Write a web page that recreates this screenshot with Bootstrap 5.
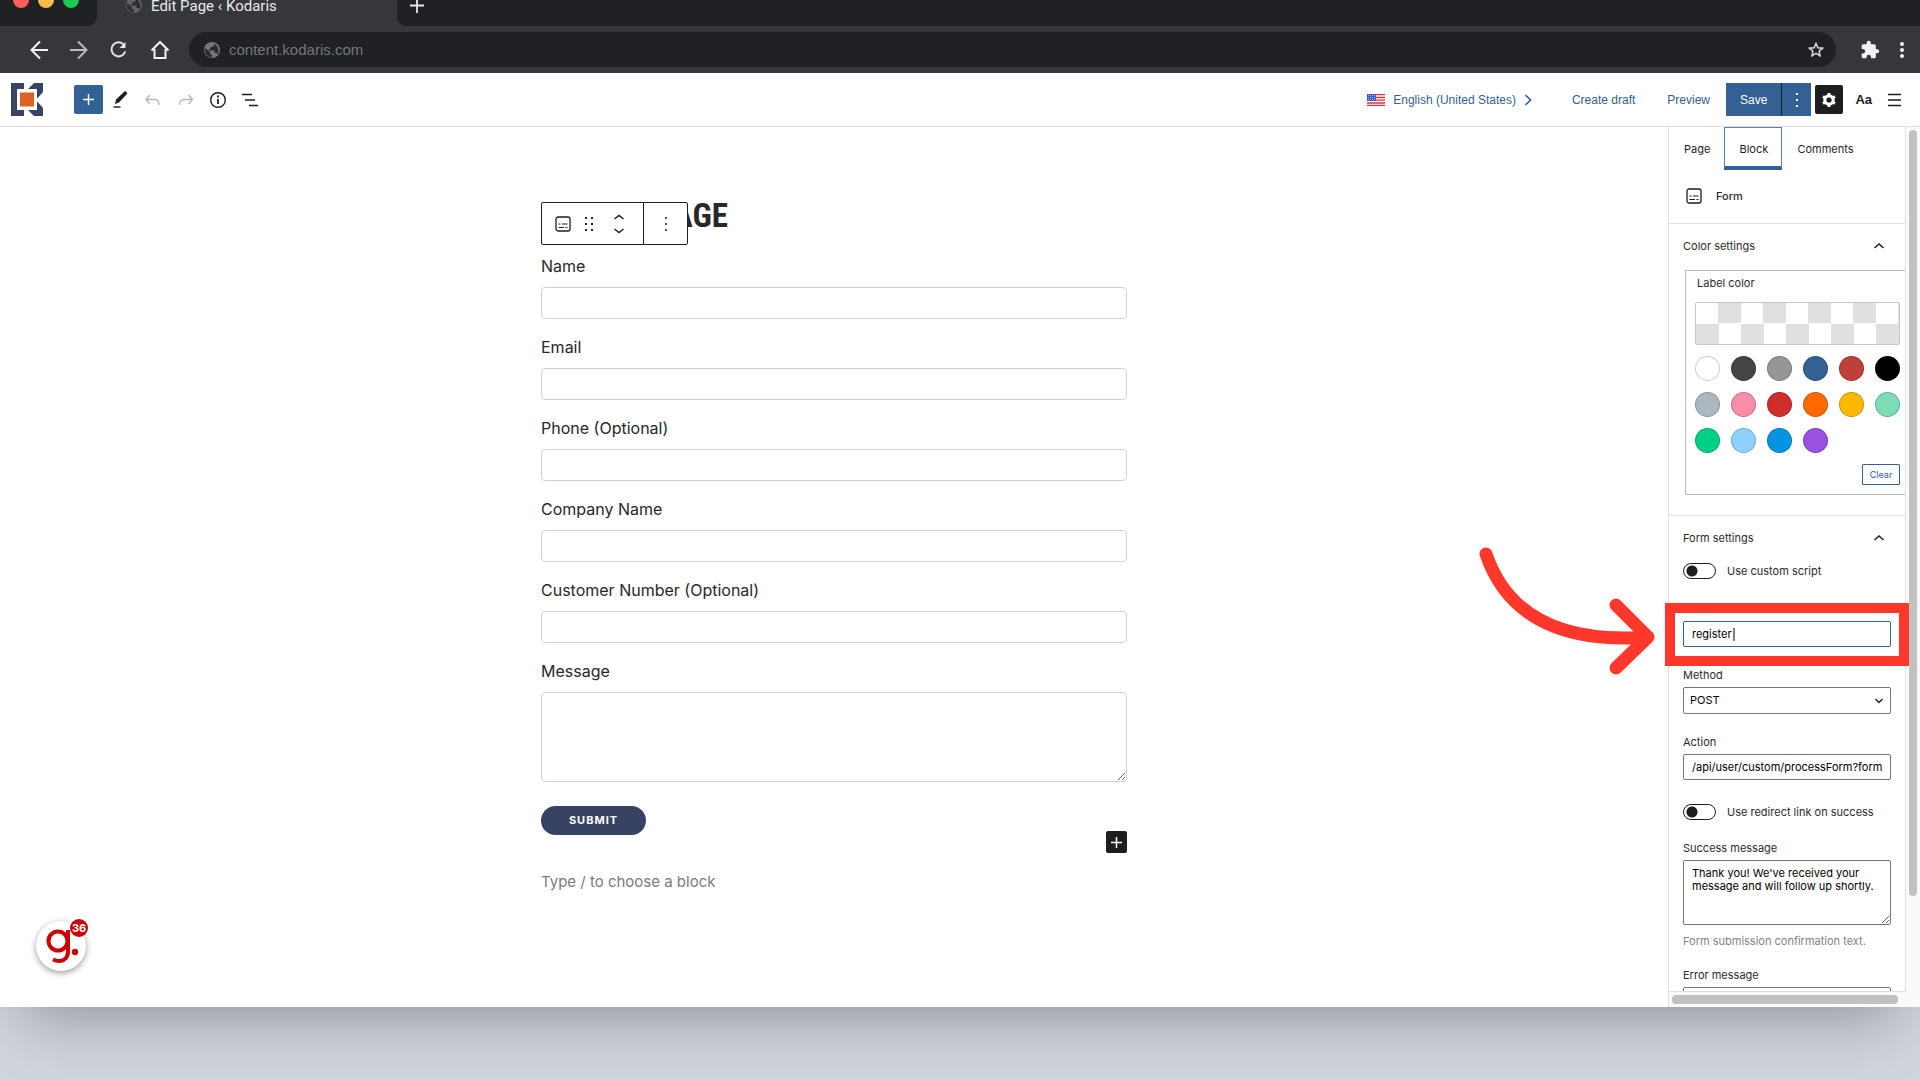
<!DOCTYPE html>
<html lang="en">
<head>
<meta charset="utf-8">
<meta name="viewport" content="width=device-width, initial-scale=1">
<title>Edit Page ‹ Kodaris</title>
<link rel="stylesheet" href="https://cdn.jsdelivr.net/npm/bootstrap@5.3.0/dist/css/bootstrap.min.css">
<style>
  :root { --blue: #336195; --ink: #1e1e1e; --chrome: #36373a; --chrome-dark: #202124; --line: #e0e0e0; }
  body { background: #d0d4dd; min-height: 100vh; color: var(--ink); font-family: Inter, sans-serif; font-size: 11px; line-height: 16px; }
  svg { display: block; flex: none; }
  button { font-family: inherit; }
  .app-window { height: calc(100vh - 73px); background: #fff; box-shadow: 0 30px 60px -24px rgba(0,0,0,.34); }
  .bare { background: none; border: 0; padding: 0; color: inherit; }

  .tab-strip { height: 26px; background: var(--chrome); color: #e8eaed; font: 15px/12px Roboto, sans-serif; }
  .strip-left { width: 97px; background: var(--chrome-dark); border-bottom-right-radius: 9px; }
  .strip-tab { width: 300px; padding-left: 28px; }
  .strip-rest { background: var(--chrome-dark); border-bottom-left-radius: 9px; padding-left: 12px; }
  .url-row { height: 47px; background: var(--chrome); padding: 0 12px 0 28px; }
  .url-nav { gap: 18px; margin-right: 17px; }
  .url-pill { height: 35px; border-radius: 18px; background: var(--chrome-dark); padding: 0 12px 0 14px; gap: 8px; }
  .url-pill input { background: none; border: 0; outline: 0; color: #74777b; font: 15px/20px "Liberation Sans", sans-serif; padding: 0; }

  .editor-bar { height: 54px; border-bottom: 1px solid var(--line); padding: 0 18px 0 11px; font: 12px/16px "Liberation Sans", sans-serif; }
  .editor-bar a { color: var(--blue); text-decoration: none; }
  .tool-set { margin-left: 31px; gap: 8px; }
  .add-btn { width: 29px; height: 29px; background: var(--blue); border-radius: 2px; color: #fff; }
  .save-btn { height: 33px; background: var(--blue); color: #fff; border: 0; border-radius: 0; padding: 0 14px; font-size: 12px; line-height: 16px; }
  .more-btn { height: 33px; width: 30px; background: var(--blue); border: 0; border-left: 1px solid var(--ink); padding: 0; }
  .gear-btn { width: 28px; height: 29px; background: var(--ink); border-radius: 2px; }
  .type-btn { font: bold 13px/20px "Liberation Sans", sans-serif; }

  .workspace { min-height: 0; }
  .canvas-area { padding-top: 72px; }
  .form-col { width: 100%; max-width: 586px; font-size: 15px; line-height: 24px; }
  .form-col h1 { font: bold 33px/34px "Liberation Sans Narrow", "Roboto Condensed", "DejaVu Sans Condensed", sans-serif; color: #282828; width: 187px; margin: 0 0 21px; text-align: right; }
  .block-bar { left: 0; top: 3px; width: 147px; height: 43px; border: 1px solid var(--ink); border-radius: 2px; background: #fff; }
  .block-bar-main { width: 102px; border-right: 1px solid var(--ink); padding-left: 13px; gap: 14px; }
  .field-row { margin-bottom: 16px; }
  .field-row label { margin-bottom: 9px; display: block; color: #282828; font-size: 16px; }
  .field-row input, .field-row textarea { display: block; width: 100%; height: 32px; border: 1px solid #ced1d8; border-radius: 4px; background: #fff; padding: 4px 8px; }
  .field-row textarea { height: 90px; }
  .submit-btn { display: block; width: 105px; height: 29px; border: 0; border-radius: 15px; background: #384363; color: #fff; font: bold 11px/16px Inter, sans-serif; letter-spacing: 1px; padding: 0 0 2px; margin-top: 24px; }
  .inserter { width: 21px; height: 22px; background: var(--ink); border-radius: 2px; margin-top: -4px; }
  .prompt { color: #7b7b7b; margin: 17px 0 0; }
  .g-bubble { left: 36px; bottom: 36px; width: 50px; height: 50px; border-radius: 50%; background: #fff; box-shadow: 0 2px 6px rgba(0,0,0,.4); }
  .g-count { right: -2px; top: -2px; width: 18px; height: 18px; border-radius: 50%; background: #c00; color: #fff; font: bold 11px/18px Inter, sans-serif; text-align: center; }

  .side { width: 252px; border-left: 1px solid var(--line); }
  .side-body { border-right: 1px solid var(--line); border-bottom: 1px solid var(--line); overflow: hidden; min-width: 0; color: #2b2b2b; }
  .side-tabs button { height: 43px; padding: 0 13px 0 14px; border: 1px solid transparent; background: none; color: var(--ink); font-size: 11px; line-height: 16px; }
  .side-tabs button.on { border: 1px solid #5b80ab; border-bottom: 4px solid var(--blue); padding-top: 3px; width: 58px; }
  .block-name { height: 54px; padding: 0 0 2px 17px; gap: 14px; border-bottom: 1px solid var(--line); font-weight: 500; }
  .side-panel { padding: 0 14px; }
  .panel-title { height: 44px; width: 100%; padding-right: 6px; }
  .color-box { margin: 2px -20px 20px 2px; border: 1px solid #bbb; padding: 4px 24px 8px 9px; height: 225px; }
  .color-box-name { padding: 0 0 2px 2px; }
  .checker { height: 43px; width: 205px; border: 1px solid #c6c6c6; border-radius: 2px; margin: 9px 0 11px; background: repeating-conic-gradient(#e0e0e0 0 25%, #fff 0 50%) 0 -1px / 45px 43px; }
  .swatches { display: grid; grid-template-columns: repeat(6, 25px); gap: 11px; }
  .dot { width: 25px; height: 25px; border-radius: 50%; border: 1px solid rgba(0,0,0,.2); padding: 0; }
  .clear-btn { display: block; width: 38px; height: 21px; margin: 11px 0 0 167px; border: 1px solid var(--blue); border-radius: 1px; color: var(--blue); background: #fff; font-size: 9px; line-height: 16px; padding: 0; }
  .settings { border-top: 1px solid var(--line); }
  .switch { height: 16px; gap: 11px; margin-top: 3px; }
  .switch input { appearance: none; width: 33px; height: 16px; margin: 0; border: 1px solid var(--ink); border-radius: 8px; background: radial-gradient(circle at 8px 7px, var(--ink) 5px, transparent 6px); }
  .side-field { margin-top: 20px; }
  .side-field label { display: block; margin-bottom: 4px; }
  .side-field input, .side-field select, .side-field textarea, .name-input { display: block; width: 100%; height: 26px; border: 1px solid #757575; border-radius: 2px; background: #fff; color: #000; font: 11px/13px Inter, sans-serif; padding: 4px 8px; outline: 0; }
  .side-field select { appearance: none; height: 27px; padding-left: 6px; }
  .side-field textarea { height: 65px; padding-top: 6px; }
  .name-input { border-color: var(--blue); margin-top: 42px; }
  .select-mark { right: 8px; bottom: 10px; pointer-events: none; }
  .help { color: #838383; margin: 8px 0 -2px; }
  .track-v { width: 14px; background: #fafafa; padding: 3px 3px 96px; }
  .track-h { height: 15px; background: #fafafa; padding: 3px 22px 3px 3px; }
  .thumb { background: #c1c1c1; border-radius: 4px; }
  .callout { right: 0; top: 400px; pointer-events: none; }
</style>
<script src="https://cdn.jsdelivr.net/npm/bootstrap@5.3.0/dist/js/bootstrap.bundle.min.js"></script>
</head>
<body>
<svg width="0" height="0" class="position-absolute" aria-hidden="true">
  <symbol id="globe" viewBox="0 0 18 18"><circle cx="9" cy="9" r="8" fill="#74777b"/><path d="M2 7l5 4v2l2 1v2.500C4 16 1 12 2 7zM11 2.500v2l-2 1.500H7.500v2H6v1.500h5.500v2.500h2l1 1.500c2-3 1-8-3.500-11z" fill="#2a2b2e"/></symbol>
  <symbol id="formicon" viewBox="0 0 16 16"><rect x="1" y="1" width="14" height="14" rx="2" fill="none" stroke="#1e1e1e" stroke-width="1.300"/><path d="M3.500 8h2M7 8h5.500M3.500 11.500h5.500M10.500 11.500h2" stroke="#1e1e1e" stroke-width="1.200"/></symbol>
  <symbol id="up" viewBox="0 0 12 8"><path d="M1.500 6L6 2l4.500 4" fill="none" stroke="#1e1e1e" stroke-width="1.500"/></symbol>
</svg>

<div class="app-window d-flex flex-column">
  <div class="tab-strip d-flex flex-shrink-0">
    <div class="strip-left">
      <svg width="97" height="12"><circle cx="21" cy="0" r="8" fill="#ff5f57"/><circle cx="46" cy="0" r="8" fill="#febc4f"/><circle cx="71" cy="0" r="8" fill="#1fc94f"/></svg>
    </div>
    <div class="strip-tab d-flex align-items-start gap-2">
      <svg width="18" height="14" viewBox="0 4 18 14" opacity=".7"><use href="#globe" width="18" height="18"/></svg>
      <span>Edit Page ‹ Kodaris</span>
    </div>
    <div class="strip-rest flex-grow-1">
      <button class="bare" aria-label="New tab"><svg width="16" height="14"><path d="M1 5.500h14M8 0v13" stroke="#e8eaed" stroke-width="1.800"/></svg></button>
    </div>
  </div>

  <div class="url-row d-flex align-items-center flex-shrink-0">
    <div class="url-nav d-flex align-items-center">
      <button class="bare" aria-label="Back"><svg width="22" height="22" fill="none" stroke="#f1f3f4" stroke-width="2"><path d="M20 11H4M12 2.500L3.500 11l8.500 8.500"/></svg></button>
      <button class="bare" aria-label="Forward"><svg width="22" height="22" fill="none" stroke="#b9bbbe" stroke-width="2"><path d="M2 11h16M10 2.500l8.500 8.500-8.500 8.500"/></svg></button>
      <button class="bare" aria-label="Reload"><svg width="22" height="22" fill="none" stroke="#e3e5e7" stroke-width="2"><path d="M16 6a7 7 0 1 0 1.200 6.500"/><path d="M17.500 3v6h-6z" fill="#e3e5e7" stroke="none"/></svg></button>
      <button class="bare" aria-label="Home"><svg width="24" height="22" fill="none" stroke="#f1f3f4" stroke-width="2"><path d="M6.500 10v9h11v-9M3.500 11.500L12 3l8.500 8.500"/></svg></button>
    </div>
    <div class="url-pill flex-grow-1 d-flex align-items-center">
      <svg width="18" height="18"><use href="#globe"/></svg>
      <input class="flex-grow-1" type="text" aria-label="Address" value="content.kodaris.com">
      <button class="bare" aria-label="Bookmark"><svg width="16" height="16" viewBox="0 0 16 16"><path d="M8 1.500l1.900 4.200 4.600.5-3.400 3 .9 4.500L8 11.400l-4 2.300.9-4.500-3.400-3 4.600-.5z" fill="none" stroke="#dadce0" stroke-width="1.500"/></svg></button>
    </div>
    <button class="bare ms-4" aria-label="Extensions"><svg width="20" height="20" viewBox="0 0 24 24"><path fill="#f1f3f4" d="M20.500 11H19V7c0-1.100-.9-2-2-2h-4V3.500a2.500 2.500 0 0 0-5 0V5H4c-1.100 0-2 .9-2 2v3.800h1.500a2.700 2.700 0 0 1 0 5.400H2V20c0 1.100.9 2 2 2h3.800v-1.500a2.700 2.700 0 0 1 5.400 0V22H17c1.100 0 2-.9 2-2v-4h1.500a2.500 2.500 0 0 0 0-5z"/></svg></button>
    <button class="bare ms-3" aria-label="Browser menu"><svg width="12" height="20" fill="#f1f3f4"><circle cx="6" cy="4" r="2"/><circle cx="6" cy="10" r="2"/><circle cx="6" cy="16" r="2"/></svg></button>
  </div>

  <header class="editor-bar d-flex align-items-center flex-shrink-0">
    <a href="#" aria-label="Kodaris"><svg width="32" height="33" viewBox="0 0 32 33"><path d="M0 0h13v33H0zM17 6L23 0h9v9l-7 8 7 8v8h-9l-6-6z" fill="#384363"/><path d="M6 6h20v8l1 2-1 3v8H6z" fill="#fff"/><rect x="8" y="8.500" width="16" height="16" fill="#fff"/><rect x="9" y="9.500" width="14" height="14" fill="#dd6226"/></svg></a>
    <div class="tool-set d-flex align-items-center">
      <button class="bare add-btn d-flex align-items-center justify-content-center" aria-label="Add block"><svg width="13" height="13"><path d="M1 6.500h11M6.500 1v11" stroke="#fff" stroke-width="1.400"/></svg></button>
      <button class="bare" aria-label="Edit"><svg width="20" height="20"><path d="M4 14l1-4.500L13.500 1.500a1 1 0 0 1 1.400 0l1 1a1 1 0 0 1 0 1.400L8 12.500z" fill="#1e1e1e"/><path d="M2.500 17h7" stroke="#1e1e1e" stroke-width="1.400"/></svg></button>
      <button class="bare ms-1" aria-label="Undo"><svg width="20" height="20" fill="none" stroke="#b8b8b8" stroke-width="1.400"><path d="M7 5L3 9.500 7 14M3 9.500h9c3 0 4 2 4 5.500"/></svg></button>
      <button class="bare ms-1" aria-label="Redo"><svg width="20" height="20" fill="none" stroke="#b8b8b8" stroke-width="1.400"><path d="M13.500 5L17.500 9.500 13.500 14M17.500 9.500H8.500c-3 0-4 2-4 5.500"/></svg></button>
      <button class="bare ms-1" aria-label="Details"><svg width="20" height="20"><circle cx="11" cy="10" r="7.300" fill="none" stroke="#1e1e1e" stroke-width="1.400"/><path d="M11 9v5M11 5.500v2" stroke="#1e1e1e" stroke-width="1.800"/></svg></button>
      <button class="bare ms-1" aria-label="List view"><svg width="20" height="20" stroke="#1e1e1e" stroke-width="1.400"><path d="M3 4.500h10M6 10h10M10 15.500h9"/></svg></button>
    </div>
    <div class="ms-auto d-flex align-items-center">
      <svg width="18" height="12"><path fill="#fff" d="M0 0h18v12H0z"/><path d="M0 .7h18M0 3.500h18M0 6.200h18M0 9h18M0 11.500h18" stroke="#d8343e" stroke-width="1.300"/><path fill="#3f5fc0" d="M0 0h9v7H0z"/><path d="M1 1.500h8M1 3.500h8M1 5.500h8" stroke="#b9c7f0" stroke-width=".8" stroke-dasharray="1 1"/></svg>
      <a href="#" class="ms-2 d-flex align-items-center">English (United States)<svg class="ms-2" width="8" height="12" fill="none" stroke="#336195" stroke-width="1.700"><path d="M1.500 1L6.500 6l-5 5"/></svg></a>
      <a href="#" class="mx-4 ps-3">Create draft</a>
      <a href="#" class="ms-2 me-3">Preview</a>
      <button class="save-btn">Save</button>
      <button class="more-btn d-flex align-items-center justify-content-center" aria-label="Save options"><svg width="4" height="14" fill="#fff"><path d="M1 0h2v2H1zM1 6h2v2H1zM1 12h2v2H1z"/></svg></button>
      <button class="bare gear-btn ms-1 d-flex align-items-center justify-content-center" aria-label="Settings"><svg width="16" height="16" viewBox="0 0 16 16"><circle cx="8" cy="8" r="4.200" fill="none" stroke="#fff" stroke-width="3"/><path d="M8 1v14M2 4.500l12 7M14 4.500l-12 7" stroke="#fff" stroke-width="3"/><circle cx="8" cy="8" r="2.600" fill="#1e1e1e"/></svg></button>
      <button class="bare type-btn ms-2 ps-1" aria-label="Styles">Aa</button>
      <button class="bare ms-3" aria-label="Options"><svg width="14" height="14" stroke="#1e1e1e" stroke-width="1.300"><path d="M0 1.500h13M0 7h13M0 12.500h13"/></svg></button>
    </div>
  </header>

  <div class="workspace d-flex flex-grow-1 position-relative">
    <main class="canvas-area flex-grow-1 d-flex justify-content-center align-items-start position-relative">
      <form class="form-col position-relative">
        <h1>PAGE</h1>
        <div class="block-bar position-absolute d-flex">
          <div class="block-bar-main d-flex align-items-center">
            <svg width="16" height="16"><use href="#formicon"/></svg>
            <svg width="8" height="14" fill="#1e1e1e"><path d="M0 0h2v2H0zM6 0h2v2H6zM0 6h2v2H0zM6 6h2v2H6zM0 12h2v2H0zM6 12h2v2H6z"/></svg>
            <svg width="24" height="20" fill="none" stroke="#1e1e1e" stroke-width="1.500"><path d="M7.500 5L12 1.500 16.500 5M7.500 15l4.500 3.500 4.500-3.500"/></svg>
          </div>
          <div class="flex-grow-1 d-flex align-items-center justify-content-center"><svg width="2" height="14" fill="#555"><path d="M0 0h2v2H0zM0 6h2v2H0zM0 12h2v2H0z"/></svg></div>
        </div>
        <div class="field-row"><label for="f1">Name</label><input id="f1" type="text"></div>
        <div class="field-row"><label for="f2">Email</label><input id="f2" type="email"></div>
        <div class="field-row"><label for="f3">Phone (Optional)</label><input id="f3" type="tel"></div>
        <div class="field-row"><label for="f4">Company Name</label><input id="f4" type="text"></div>
        <div class="field-row"><label for="f5">Customer Number (Optional)</label><input id="f5" type="text"></div>
        <div class="field-row"><label for="f6">Message</label><textarea id="f6"></textarea></div>
        <button type="button" class="submit-btn">SUBMIT</button>
        <button type="button" class="bare inserter d-flex align-items-center justify-content-center ms-auto" aria-label="Add block"><svg width="13" height="13"><path d="M1 6.500h11M6.500 1v11" stroke="#fff" stroke-width="1.500"/></svg></button>
        <p class="prompt">Type / to choose a block</p>
      </form>
      <div class="g-bubble position-absolute">
        <svg width="50" height="50" fill="none" stroke="#c00" stroke-width="4"><circle cx="22" cy="20" r="9.500"/><path d="M32 9v21c0 7-4 10-9 10-3 0-4-.5-6-1.500"/><circle cx="39" cy="31" r="3.200" fill="#c00" stroke="none"/></svg>
        <span class="g-count position-absolute">36</span>
      </div>
    </main>

    <aside class="side d-flex flex-column flex-shrink-0">
      <div class="d-flex flex-grow-1 overflow-hidden">
        <div class="side-body flex-grow-1">
          <div class="side-tabs d-flex"><button>Page</button><button class="on">Block</button><button>Comments</button></div>
          <div class="block-name d-flex align-items-center"><svg width="16" height="16"><use href="#formicon"/></svg><span>Form</span></div>
          <section class="side-panel">
            <button class="bare panel-title d-flex align-items-center justify-content-between">Color settings<svg width="12" height="8"><use href="#up"/></svg></button>
            <div class="color-box">
              <div class="color-box-name">Label color</div>
              <div class="checker"></div>
              <div class="swatches">
                <button class="dot" style="background:#fff" aria-label="White"></button>
                <button class="dot" style="background:#444" aria-label="Dark gray"></button>
                <button class="dot" style="background:#969696" aria-label="Gray"></button>
                <button class="dot" style="background:#336195" aria-label="Blue"></button>
                <button class="dot" style="background:#c03f38" aria-label="Brick"></button>
                <button class="dot" style="background:#000" aria-label="Black"></button>
                <button class="dot" style="background:#abb8c3" aria-label="Bluish gray"></button>
                <button class="dot" style="background:#f78da7" aria-label="Pink"></button>
                <button class="dot" style="background:#cf2e2e" aria-label="Red"></button>
                <button class="dot" style="background:#ff6900" aria-label="Orange"></button>
                <button class="dot" style="background:#fcb900" aria-label="Amber"></button>
                <button class="dot" style="background:#7bdcb5" aria-label="Light green"></button>
                <button class="dot" style="background:#00d084" aria-label="Green"></button>
                <button class="dot" style="background:#8ed1fc" aria-label="Light blue"></button>
                <button class="dot" style="background:#0693e3" aria-label="Cyan blue"></button>
                <button class="dot" style="background:#9b51e0" aria-label="Purple"></button>
              </div>
              <button class="clear-btn">Clear</button>
            </div>
          </section>
          <section class="side-panel settings">
            <button class="bare panel-title d-flex align-items-center justify-content-between">Form settings<svg width="12" height="8"><use href="#up"/></svg></button>
            <div class="switch d-flex align-items-center"><input type="checkbox" id="s1"><label for="s1">Use custom script</label></div>
            <input class="name-input" type="text" aria-label="Form name" value="register">
            <div class="side-field position-relative"><label for="m">Method</label><select id="m"><option>POST</option></select><svg class="select-mark position-absolute" width="8" height="6" fill="none" stroke="#1e1e1e" stroke-width="1.400"><path d="M.5 1L4 4.500 7.500 1"/></svg></div>
            <div class="side-field"><label for="a">Action</label><input id="a" type="text" value="/api/user/custom/processForm?formName=register"></div>
            <div class="switch d-flex align-items-center mt-4"><input type="checkbox" id="s2"><label for="s2">Use redirect link on success</label></div>
            <div class="side-field"><label for="ok">Success message</label><textarea id="ok">Thank you! We've received your message and will follow up shortly.</textarea><p class="help">Form submission confirmation text.</p></div>
            <div class="side-field"><label for="er">Error message</label><textarea id="er"></textarea></div>
          </section>
        </div>
        <div class="track-v"><div class="thumb h-100"></div></div>
      </div>
      <div class="track-h flex-shrink-0"><div class="thumb h-100"></div></div>
    </aside>

    <svg class="callout position-absolute" width="450" height="150" fill="none" stroke="#ff382b" aria-hidden="true">
      <path d="M16 27C36 86 88 117 178 110M146 78l32 32-32 31" stroke-width="13" stroke-linecap="round" stroke-linejoin="round"/>
      <rect x="200" y="81" width="234" height="53" stroke-width="10"/>
      <path d="M264 101v13" stroke="#000" stroke-width="1"/>
    </svg>
  </div>
</div>
</body>
</html>
